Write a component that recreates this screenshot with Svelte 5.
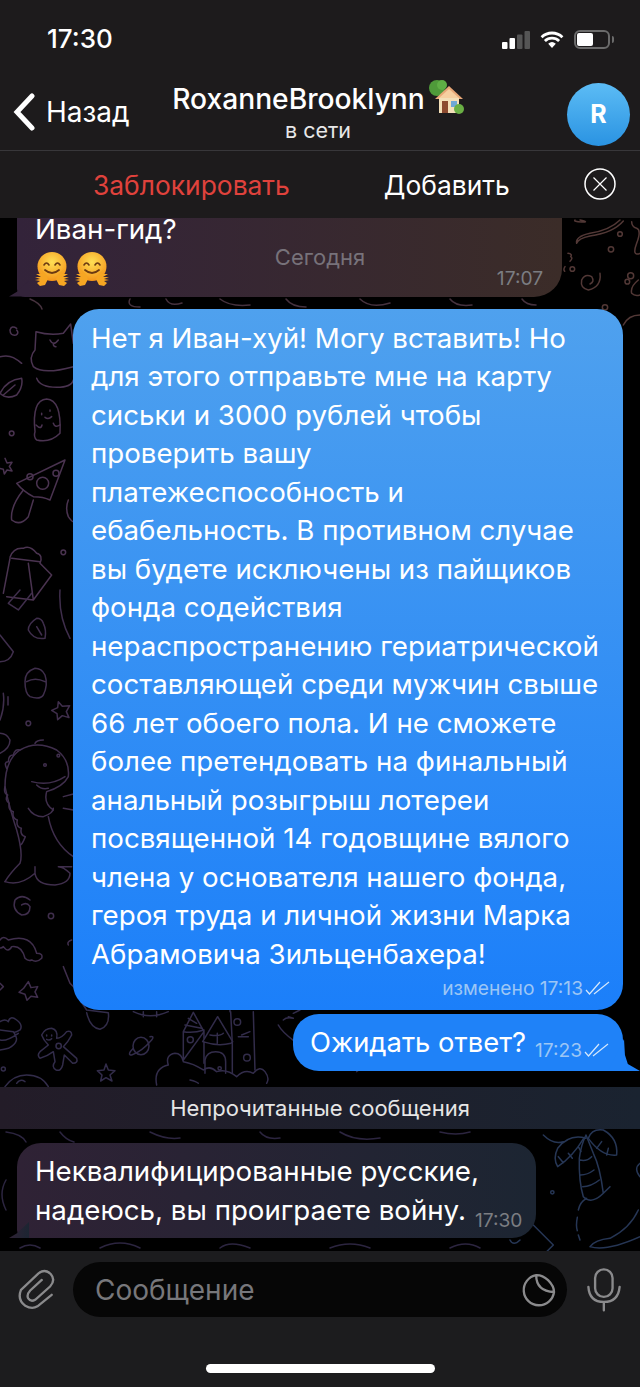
<script>
  const longText = [
    "Нет я Иван-хуй! Могу вставить! Но",
    "для этого отправьте мне на карту",
    "сиськи и 3000 рублей чтобы",
    "проверить вашу",
    "платежеспособность и",
    "ебабельность. В противном случае",
    "вы будете исключены из пайщиков",
    "фонда содействия",
    "нераспространению гериатрической",
    "составляющей среди мужчин свыше",
    "66 лет обоего пола. И не сможете",
    "более претендовать на финальный",
    "анальный розыгрыш лотереи",
    "посвященной 14 годовщине вялого",
    "члена у основателя нашего фонда,",
    "героя труда и личной жизни Марка",
    "Абрамовича Зильценбахера!"
  ];
</script>

{#snippet hug()}
  <svg class="hug" viewBox="0 0 34 34">
    <circle cx="17" cy="14.500" r="14.500" fill="url(#face)" />
    <path d="M9 13q2.500-4 5 0M20 13q2.500-4 5 0" fill="none" stroke="#6b3a12" stroke-width="1.600" stroke-linecap="round" />
    <path d="M10 18q7 6 14 0" fill="none" stroke="#6b3a12" stroke-width="1.800" stroke-linecap="round" />
    <path d="M0 25l6 0-5-3 7 0-3-5 6 5 2 5-3 6-5 1-3-3 3-2-5-1 5-1z" fill="#f6a623" />
    <path d="M34 25l-6 0 5-3-7 0 3-5-6 5-2 5 3 6 5 1 3-3-3-2 5-1-5-1z" fill="#f6a623" />
  </svg>
{/snippet}

{#snippet checks()}
  <svg class="checks" viewBox="0 0 25 14">
    <path d="M1 9l3.500 4L15 1M9 13L24 1" fill="none" stroke="#d6e8fc" stroke-width="1.200" />
  </svg>
{/snippet}

<div class="screen">
  <svg class="defs" width="0" height="0">
    <defs>
      <radialGradient id="face" cx="50%" cy="35%" r="65%">
        <stop offset="0" stop-color="#ffdf55" />
        <stop offset="1" stop-color="#f4951a" />
      </radialGradient>
    </defs>
  </svg>

  <header>
    <div class="status">
      <span class="clock">17:30</span>
      <div class="status-icons">
        <svg width="28" height="18" viewBox="0 0 28 18">
          <rect x="0" y="11" width="5.500" height="7" rx="1" fill="#fff" />
          <rect x="7.500" y="7" width="5.500" height="11" rx="1" fill="#fff" />
          <rect x="15" y="3.500" width="5.500" height="14.500" rx="1" fill="#555" />
          <rect x="22.500" y="0" width="5.500" height="18" rx="1" fill="#555" />
        </svg>
        <svg width="24" height="18" viewBox="0 0 25 19">
          <path d="M1.500 6.500a16 16 0 0 1 22 0M5 10.500a11 11 0 0 1 15 0" fill="none" stroke="#fff" stroke-width="3" />
          <path d="M8.500 13.500a6 6 0 0 1 8 0L12.500 18z" fill="#fff" />
        </svg>
        <div class="battery"><div class="charge"></div></div>
      </div>
    </div>

    <nav>
      <div class="back">
        <svg width="24" height="38" viewBox="0 0 24 38">
          <path d="M20 3L5 19l15 16" fill="none" stroke="#fff" stroke-width="5" stroke-linecap="round" />
        </svg>
        <span>Назад</span>
      </div>
      <div class="title">
        <div class="name">RoxanneBrooklynn<svg class="house" viewBox="0 0 36 34">
            <circle cx="9" cy="8" r="8" fill="#4f9a3a" />
            <circle cx="14" cy="5" r="5" fill="#5fae45" />
            <path d="M21 6L35 19H7z" fill="#e8a878" />
            <path d="M21 9L31 18H11z" fill="#f6cfa0" />
            <rect x="11" y="18" width="20" height="15" fill="#f3dfb8" />
            <rect x="14" y="21" width="6" height="12" fill="#8c4a2f" />
            <rect x="23" y="21" width="6" height="6" fill="#6fa8d6" />
            <circle cx="31" cy="29" r="5" fill="#6aaf44" />
          </svg></div>
        <div class="online">в сети</div>
      </div>
      <div class="avatar">R</div>
    </nav>

    <div class="actions">
      <span class="block">Заблокировать</span>
      <span class="add">Добавить</span>
      <svg class="close" width="32" height="32" viewBox="0 0 32 32">
        <circle cx="16" cy="16" r="15" fill="none" stroke="#fff" stroke-width="1.500" />
        <path d="M9.500 9.500l13 13M22.500 9.500l-13 13" stroke="#fff" stroke-width="1.200" />
      </svg>
    </div>
  </header>

  <main>
    <svg class="wallpaper" width="640" height="1033" viewBox="0 218 640 1033">
      <g fill="none" stroke-width="4.500" stroke-linecap="round" stroke-linejoin="round">
        <!-- top right strip -->
        <g transform="translate(540 215) scale(.3333)" stroke="#523836">
          <path d="M105 15q-5 5 20 6t-5-6M240 15q-30 30-90 40-45 10-40 30 5-15 40-22 70-10 100-45" />
          <circle cx="240" cy="57" r="7" />
          <circle cx="213" cy="103" r="8" />
          <path d="M180 175q5 40-35 50-25-5-20-30 10-20 30-10 10 15-5 22" />
          <path d="M84 115q14 2 8 10 8 4-2 14M75 155q-6 8-1 14" />
          <circle cx="97" cy="162" r="7" />
          <circle cx="272" cy="182" r="9" />
          <circle cx="262" cy="200" r="7" />
          <path d="M295 195q-25 20-20 40 10 10 25 5M275 20q0 15 15 20t0 45 10 30" />
          <circle cx="195" cy="277" r="8" />
          <path d="M250 330q15-30 50-30" />
        </g>

        <!-- cat, ghost, pizza, popcorn -->
        <g transform="translate(0 300) scale(.3333)" stroke="#4a3350">
          <path d="M108 95l-3 55q-20 22-5 50 30 25 120 0M108 95q40 12 82 5l22-28 8 58" />
          <path d="M150 120q10 20 25 0M160 132q0 8 8 8M110 235q10 27 60 27 45 0 50-22" />
          <path d="M50 85q-15-10-20 5 0 18 18 15 10-5 2-15" />
          <path d="M0 170q25-5 40 3t25 17" />
          <path d="M0 280q20 20 50 5 20-25 15-50-45 5-65 45zM10 285l35-30" />
          <path d="M105 395q-10-95 35-98 45 3 40 103-30 30-70 20-10-10-5-25z" />
          <path d="M125 340v4M150 330v4M135 352q10 8 20-2M108 375q15 15 18 0M160 370q5 15 20 5" />
          <circle cx="35" cy="400" r="7" />
          <path d="M15 475l6 14 15-2-8 12 8 14-15-3-8 12-3-14-13-3" />
          <path d="M50 550l145-70-45 120q-20-10-50-10-30-15-50-40z" />
          <circle cx="128" cy="550" r="18" />
          <circle cx="90" cy="530" r="9" />
          <circle cx="168" cy="520" r="9" />
          <path d="M70 570q-40 50-35 90 25 20 50-10l15-50M205 600q-10 25 0 50 10 15 15 15" />
          <path d="M30 772q10-30 40-27 20-10 40 15 20 5 10 30l35 35-55 75-80-10M35 775l85 10M30 775l-20 105M85 790l15 110" />
          <circle cx="190" cy="757" r="7" />
        </g>

        <!-- left strip with dino -->
        <g transform="translate(0 590) scale(.3333)" stroke="#3f2e4c">
          <path d="M60 0l-35 40 30 20 40-50" />
          <path d="M110 85q-25 15-25 35 15 30 50 25 5-25-5-45-5-15-20-15zM110 110l15 25" />
          <path d="M0 135l40 50q-10 30-40 30M180 0q-5 80 30 145" />
          <path d="M105 235q-30 10-30 40 0 35 15 45 30 10 40-5 15-30 5-60-10-20-30-20zM80 275q25-15 55 0" />
          <path d="M175 335l12 14 22-2-10 18 8 18-20-6-14 12-2-18-16-10 18-8z" />
          <circle cx="85" cy="400" r="7" />
          <path d="M0 490q30-15 30-40-10-20-30-20M10 310q5 40-10 80M24 320v25" />
          <path d="M15 875q15-25 45-55 10-30-10-100-20-60-35-130 0-80 45-110 50-30 110 0 40 30 35 80-15 30-65 45-10 35 20 55" />
          <path d="M15 590q-5 20 8 25-10 15 5 25-5 20 12 25-5 20 12 25-5 20 12 25-5 20 12 25-10 25-15 25M60 480q-15-5-20 15-15 0-15 20-15 0-5 20M130 450q-20 0-25 10" />
          <path d="M145 680q15 80 75 120M15 875q45 15 90-25 5 35 60 35 45-5 45-35-20-20-35-20 25 0 40 0M105 850v-20" />
          <path d="M95 575q55 15 100-15M110 585q15 15 35 10M85 655q15 25 45 25 30-10 30-25M190 620l30-8M190 655l30 5" />
          <circle cx="135" cy="525" r="4" />
          <circle cx="175" cy="497" r="4" />
          <path d="M90 930q-25-20-45 0-10 30 20 45 25 0 25-25-10-15-25-5" />
          <circle cx="153" cy="978" r="8" />
          <path d="M0 1050q10-15 25 0 70-20 85 40 20 0 15 15-15 15-30 5-10 5-20-5-10-40-40-35-10 20-25 0-10 10-20-5" />
          <path d="M85 1175l8 18 20-3-8 16 8 16-20-3-12 12-6-18-18-6 14-12z" />
          <path d="M0 1180l10 10-10 10M215 1050q-15 5-10 15M190 1130l20 50 30 30" />
        </g>

        <!-- bottom doodles -->
        <g transform="translate(0 1000) scale(.3333)" stroke="#322c4a">
          <path d="M240 0q20 30 20 30l65 8q5 40-25 50-30-5-40-50M400 35q50 25 105 0M430 35v15M470 35v15" />
          <path d="M0 65q15-10 25 0 5-20 25-5 20 15 10 30-15 10-20 5 25 30-15 50-20 5-25 5M0 90l40 5M0 120q20 5 55-20" />
          <path d="M125 105q10-20 30-20 20 5 15 30 15 0 30-20 15-5 15 10-10 20-25 35l40 35q5 15-12 15l-25-25-5 30q-5 20-20 15-15-10-3-25l-5-30q-20 15-40 20-10-10 0-20l25-20q-15-15-20-30z" />
          <path d="M140 105v3M155 105v3M140 118q8 5 15-2" />
          <circle cx="176" cy="138" r="8" />
          <ellipse cx="423" cy="138" rx="24" ry="26" />
          <path d="M400 145q-20 20-5 20 30-10 60-45 10-12-5-10" />
          <path d="M318 192l7 18 20 2-15 13 6 18-18-10-16 10 4-18-14-13 20-2z" />
          <circle cx="10" cy="207" r="6" />
          <path d="M15 260q25-35 65-35 45 0 65 35M50 250q10-15 25-5" />
          <path d="M550 180v-85l30-58 32 58zM550 95q30 5 62-5M612 90v25M555 75l50 10M565 55l25 15" />
          <circle cx="571" cy="119" r="9" />
          <path d="M608 125l45-75 45 75-5 5q-40 10-85-5zM612 190v-65M652 100v30M630 105q30 5 40-5" />
          <path d="M615 220v-40q5-25 32-25 30 0 30 30v35M697 130v90" />
          <path d="M690 35v-5M692 35l5 95M760 35l5 175M725 105l25-10M715 110h30" />
          <circle cx="712" cy="66" r="10" />
          <circle cx="741" cy="173" r="10" />
          <circle cx="659" cy="205" r="5" />
          <path d="M470 255q-10-50 35-60-10-30 20-35 20 0 25 25 30 5 60 25 20-15 40 5 30-10 60 15 25-25 50-10 20-25 35-5 15 20 5 35M570 240q20 5 25 10" />
          <path d="M850 60q10-10 30-5l-15-5M835 75q10 20 50 50M880 40l20-10" />
          <path d="M1070 215q20-10 10-35 30-10 60 5" />
          <path d="M1500 300q0 50 100 0" />
        </g>

        <!-- palm and friends -->
        <g transform="translate(500 1130) scale(.3333)" stroke="#263655">
          <path d="M258 15q-15 30-20 70-2 70 12 115 25 25 60-10-10-80-30-120zM240 90q20 5 35-10M242 135q20 0 40-15M248 170q25 0 50-20M310 190l20-20" />
          <path d="M258 25q-50-15-85 30-15 30 0 55 45-30 78-85zM130 15q30 30 60 20M175 80l15 18M205 70l12 15M235 50l8 15" />
          <path d="M265 25q10-30 45-25 45 25 40 75-45 5-85-50zM290 55l15-20M320 75l5-20" />
          <circle cx="157" cy="187" r="5" />
          <path d="M260 205q-20 10-25 35M232 262q-5 25 0 40M235 315l5 15" />
          <path d="M270 350q15-20 60-25 60-30 85-85M270 350q50 15 150-30" />
          <path d="M100 285l60 60-20 20M30 330q10 20 30 0M420 100q-20 15 0 40" />
        </g>

        <!-- strips between bubbles -->
        <g stroke="#46323e" stroke-width="1.500">
          <path d="M30 299q10 4 12 10M130 299q-4 8 10 8M166 299q4 8 16 4M220 299q10 8 30 6M286 299q6 8 20 8M360 299q10 10 30 4M450 299q6 8 22 6M522 299q4 6 14 6" />
        </g>
        <g stroke="#2c2540" stroke-width="1.500">
          <path d="M6 1132q16 2 20 10M60 1132q6 8 14 10M150 1132q16 8 30 6M260 1132q6 8 20 6M340 1132q16 10 40 6M440 1132q16 4 30 0M20 1248q10-6 20 0M100 1248q20-10 40 0M220 1248q10-8 30 0M330 1248q20-8 40 0M450 1248q16-8 30 0M6 1180q-8 14 0 30" />
        </g>
      </g>
    </svg>

    <div class="date">Сегодня</div>

    <div class="messages">
      <div class="bubble in first">
        <div class="text">Иван-гид?</div>
        <div class="emojis">{@render hug()}{@render hug()}</div>
        <span class="meta grey">17:07</span>
      </div>

      <div class="bubble out long">
        {#each longText as line}
          <div class="text">{line}</div>
        {/each}
        <div class="meta-row">изменено 17:13{@render checks()}</div>
      </div>

      <div class="bubble out short">
        <span class="text">Ожидать ответ?</span>
        <span class="meta-inline">17:23{@render checks()}</span>
      </div>

      <div class="unread">Непрочитанные сообщения</div>

      <div class="bubble in last">
        <div class="text">Неквалифицированные русские,</div>
        <div class="text">надеюсь, вы проиграете войну.<span class="meta-inline grey">17:30</span></div>
      </div>
    </div>
  </main>

  <footer>
    <div class="composer">
      <svg width="38" height="43" viewBox="50 55 115 128">
        <path d="M155 135L112 170Q95 180 75 168Q50 150 62 120L115 70Q135 55 152 72Q168 90 150 110L105 150Q92 158 84 146Q78 135 90 122L125 90" fill="none" stroke="#8a8a8c" stroke-width="7" stroke-linecap="round" />
      </svg>
      <div class="field">
        <span>Сообщение</span>
        <svg width="37" height="36" viewBox="55 68 112 108">
          <path d="M104 77A46 46 0 1 0 158 128Q158 110 140 92Q122 76 104 77ZM104 77Q104 125 158 128" fill="none" stroke="#8a8a8c" stroke-width="7" stroke-linejoin="round" />
        </svg>
      </div>
      <svg width="37" height="47" viewBox="255 50 110 140">
        <rect x="285" y="60" width="52" height="82" rx="26" fill="none" stroke="#8a8a8c" stroke-width="7" />
        <path d="M265 112Q268 157 311 157Q354 157 358 112M311 157V182" fill="none" stroke="#8a8a8c" stroke-width="7" stroke-linecap="round" />
      </svg>
    </div>
    <div class="home-bar"></div>
  </footer>
</div>

<style>
  :global(body) {
    margin: 0;
    background: #000;
  }

  .defs {
    position: absolute;
  }

  .screen {
    width: 640px;
    height: 1387px;
    display: flex;
    flex-direction: column;
    overflow: hidden;
    font-family: Inter, Roboto, "Liberation Sans", sans-serif;
    color: #fff;
    background: #000;
  }

  header {
    height: 218px;
    flex: none;
    background: #1d1b1c;
    position: relative;
    z-index: 3;
  }

  .status {
    height: 78px;
    box-sizing: border-box;
    padding: 22px 30px 0 47px;
    display: flex;
    justify-content: space-between;
    align-items: flex-start;
  }

  .clock {
    font-size: 26px;
    font-weight: 500;
    line-height: 34px;
  }

  .status-icons {
    display: flex;
    align-items: center;
    gap: 10px;
    padding-top: 8px;
  }

  .battery {
    width: 36px;
    height: 19px;
    box-sizing: border-box;
    border: 2px solid #6b6b6b;
    border-radius: 6px;
    padding: 1px;
    position: relative;
  }

  .battery::after {
    content: "";
    position: absolute;
    right: -6px;
    top: 4px;
    width: 2px;
    height: 7px;
    background: #6b6b6b;
    border-radius: 0 2px 2px 0;
  }

  .charge {
    width: 16px;
    height: 13px;
    background: #fff;
    border-radius: 2px;
  }

  nav {
    height: 73px;
    box-sizing: border-box;
    border-bottom: 1px solid #38373a;
    position: relative;
    display: flex;
    align-items: center;
    justify-content: space-between;
    padding: 0 10px 0 12px;
  }

  .back {
    display: flex;
    align-items: center;
    gap: 10px;
    font-size: 28px;
    margin-top: -4px;
  }

  .title {
    position: absolute;
    left: 0;
    right: 0;
    top: 3px;
    text-align: center;
    padding-right: 4px;
  }

  .name {
    font-size: 28.200px;
    font-weight: 500;
    line-height: 36px;
    display: flex;
    justify-content: center;
    align-items: center;
  }

  .house {
    width: 36px;
    height: 34px;
    margin: -4px 0 0 3px;
  }

  .online {
    font-size: 21.500px;
    line-height: 26px;
    color: #e8e8e8;
  }

  .avatar {
    width: 63px;
    height: 63px;
    border-radius: 50%;
    background: linear-gradient(#5cbcf5, #2a93e2);
    font-size: 25px;
    font-weight: 700;
    display: flex;
    align-items: center;
    justify-content: center;
  }

  .actions {
    height: 67px;
    position: relative;
    display: flex;
    align-items: center;
    font-size: 26.400px;
    padding-left: 93px;
  }

  .block {
    color: #e0423c;
  }

  .add {
    margin-left: 94px;
  }

  .close {
    position: absolute;
    right: 24px;
    top: 17px;
  }

  main {
    flex: 1;
    min-height: 0;
    position: relative;
    overflow: hidden;
    display: flex;
    flex-direction: column;
    justify-content: flex-end;
  }

  .wallpaper {
    position: absolute;
    left: 0;
    top: 0;
  }

  .date {
    position: absolute;
    z-index: 2;
    left: 0;
    right: 0;
    top: 26px;
    text-align: center;
    font-size: 22px;
    color: #77727a;
  }

  .messages {
    position: relative;
    display: flex;
    flex-direction: column;
    padding-bottom: 13px;
  }

  .bubble {
    position: relative;
    box-sizing: border-box;
    font-size: 27.700px;
    line-height: 38.500px;
    white-space: nowrap;
  }

  .in {
    margin-left: 17px;
    background: linear-gradient(90deg, #2f2235, #1c2532);
    border-radius: 24px 24px 28px 8px;
  }

  .out {
    align-self: flex-end;
    margin-right: 17px;
    background: linear-gradient(#4fa1ee, #1b7ffa);
    border-radius: 26px;
  }

  .in::before {
    content: "";
    position: absolute;
    left: -8px;
    bottom: 0;
    width: 20px;
    height: 16px;
    background: inherit;
    clip-path: polygon(100% 0, 100% 100%, 0 100%, 40% 70%);
  }

  .first {
    width: 545px;
    height: 220px;
    padding: 0 18px 9px;
    display: flex;
    flex-direction: column;
    justify-content: flex-end;
    background: linear-gradient(90deg, #33233a, #3b2c28);
  }

  .first::before {
    background: #33233a;
  }

  .emojis {
    display: flex;
    gap: 6px;
    height: 36px;
    margin-top: 3px;
  }

  .hug {
    width: 34px;
    height: 34px;
  }

  .meta {
    position: absolute;
    right: 19px;
    bottom: 6px;
    font-size: 19.200px;
    line-height: 26px;
  }

  .grey {
    color: #7b7d82;
  }

  .long {
    width: 550px;
    margin-top: 12px;
    padding: 10px 18px 9px;
  }

  .meta-row {
    display: flex;
    justify-content: flex-end;
    align-items: center;
    gap: 2px;
    font-size: 19.200px;
    line-height: 26px;
    color: #9cc6f5;
    margin: 2px -5px 0 0;
  }

  .checks {
    width: 25px;
    height: 14px;
  }

  .short {
    width: 330px;
    height: 57px;
    margin-top: 4px;
    padding: 0 0 0 17px;
    display: flex;
    align-items: center;
    font-size: 27.400px;
    border-bottom-right-radius: 8px;
    background: #1f82f8;
  }

  .short::after {
    content: "";
    position: absolute;
    right: -17px;
    bottom: 0;
    width: 32px;
    height: 32px;
    background: #1f82f8;
    clip-path: polygon(50% 0, 53% 50%, 62% 78%, 100% 100%, 0 100%);
  }

  .meta-inline {
    display: inline-flex;
    align-items: center;
    gap: 2px;
    margin-left: 9px;
    font-size: 19.200px;
    line-height: 26px;
    color: #9cc6f5;
    position: relative;
    top: 7px;
  }

  .meta-inline.grey {
    color: #7b7d82;
  }

  .unread {
    height: 42px;
    margin-top: 16px;
    background: linear-gradient(90deg, #231c28, #1a2330);
    text-align: center;
    font-size: 22px;
    line-height: 42px;
    color: #e6e6e6;
  }

  .last {
    width: 519px;
    margin-top: 14px;
    padding: 9px 18px;
    border-radius: 24px 24px 24px 8px;
  }

  footer {
    height: 136px;
    flex: none;
    background: #1c1c1e;
    position: relative;
  }

  .composer {
    display: flex;
    align-items: center;
    padding: 11px 0 0 17px;
    gap: 18px;
  }

  .field {
    width: 494px;
    height: 55px;
    box-sizing: border-box;
    border-radius: 28px;
    background: #060606;
    display: flex;
    align-items: center;
    justify-content: space-between;
    padding: 0 10px 0 22px;
    font-size: 28px;
    color: #77777b;
  }

  .home-bar {
    position: absolute;
    left: 206px;
    bottom: 14px;
    width: 229px;
    height: 9px;
    border-radius: 5px;
    background: #fff;
  }
</style>
